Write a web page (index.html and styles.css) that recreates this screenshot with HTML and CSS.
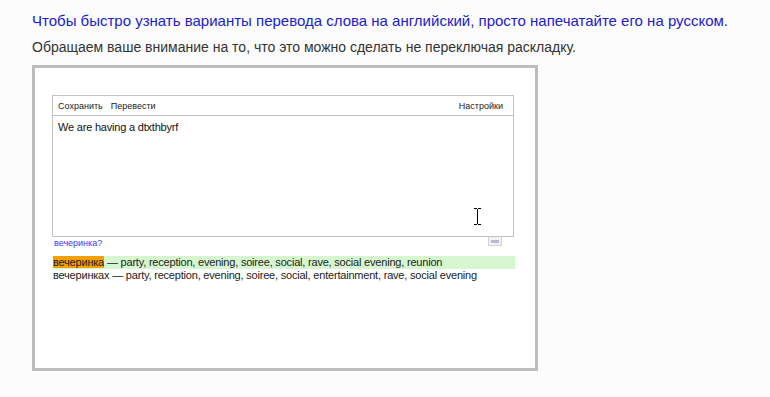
FILE: index.html
```html
<!DOCTYPE html>
<html lang="ru">
<head>
<meta charset="utf-8">
<link rel="stylesheet" href="styles.css">
</head>
<body>
<p class="lead">Чтобы быстро узнать варианты перевода слова на английский, просто напечатайте его на русском.</p>
<p class="note">Обращаем ваше внимание на то, что это можно сделать не переключая раскладку.</p>
<div class="frame">
  <div class="editor">
    <div class="toolbar">
      <span class="tool">Сохранить</span>
      <span class="tool">Перевести</span>
      <span class="spacer"></span>
      <span class="tool">Настройки</span>
    </div>
    <div class="area">
      <div class="typed">We are having a dtxthbyrf</div>
      <svg class="ibeam" width="9" height="17" viewBox="0 0 9 17"><path d="M1 0.5h3M5 0.5h3M4.5 1v15M1 16.5h3M5 16.5h3" stroke="#000" stroke-width="1" fill="none"/></svg>
    </div>
  </div>
  <div class="under">
    <span class="suggest">вечеринка?</span>
    <span class="grip"><span class="grip-bar"></span></span>
  </div>
  <div class="results">
    <div class="row hit"><span class="word">вечеринка</span> — party, reception, evening, soiree, social, rave, social evening, reunion</div>
    <div class="row">вечеринках — party, reception, evening, soiree, social, entertainment, rave, social evening</div>
  </div>
</div>
</body>
</html>
```
FILE: styles.css
```css
html, body {
  margin: 0;
  padding: 0;
  background: #fcfcfc;
}
body {
  padding: 12px 0 0 32px;
  font-family: Arial, "Liberation Sans", sans-serif;
}
.lead, .note {
  margin: 0;
  line-height: 18px;
}
.lead {
  color: #2020cc;
  font-size: 15px;
}
.note {
  color: #333333;
  font-size: 14px;
  margin-top: 8px;
}
.frame {
  margin-top: 9px;
  width: 500px;
  height: 300px;
  border: 3px solid #bdbdbd;
  background: #ffffff;
}
.editor {
  margin: 27px 0 0 17px;
  width: 460px;
  border: 1px solid #c3c3c3;
}
.toolbar {
  display: flex;
  align-items: center;
  height: 19px;
  border-bottom: 1px solid #c3c3c3;
  padding: 0 10px 0 5px;
  font-size: 9px;
  color: #222;
}
.tool {
  margin-right: 8px;
}
.tool:last-child {
  margin-right: 0;
}
.spacer {
  flex: 1;
}
.area {
  position: relative;
  height: 120px;
}
.typed {
  padding: 4px 0 0 5px;
  font-size: 11px;
  line-height: 14px;
  letter-spacing: -0.2px;
  color: #111;
}
.ibeam {
  position: absolute;
  left: 420px;
  top: 92px;
}
.under {
  display: flex;
  justify-content: space-between;
  width: 462px;
  margin-left: 17px;
  height: 19px;
}
.suggest {
  font-size: 9px;
  color: #3a3af0;
  padding: 1px 0 0 2px;
  line-height: 10px;
}
.grip {
  width: 12px;
  height: 8px;
  border: 1px solid #d2d2d2;
  border-top: none;
  background: #f2f2f6;
  margin-right: 12px;
  display: flex;
  align-items: center;
  justify-content: center;
}
.grip-bar {
  width: 8px;
  height: 3px;
  background: #b8b8d0;
}
.results {
  margin-left: 18px;
  width: 462px;
  font-size: 11px;
  letter-spacing: -0.2px;
  color: #222;
}
.row {
  height: 13px;
  line-height: 13px;
  white-space: nowrap;
}
.hit {
  background: #d6f6d0;
}
.word {
  background: #f4a000;
}
```
